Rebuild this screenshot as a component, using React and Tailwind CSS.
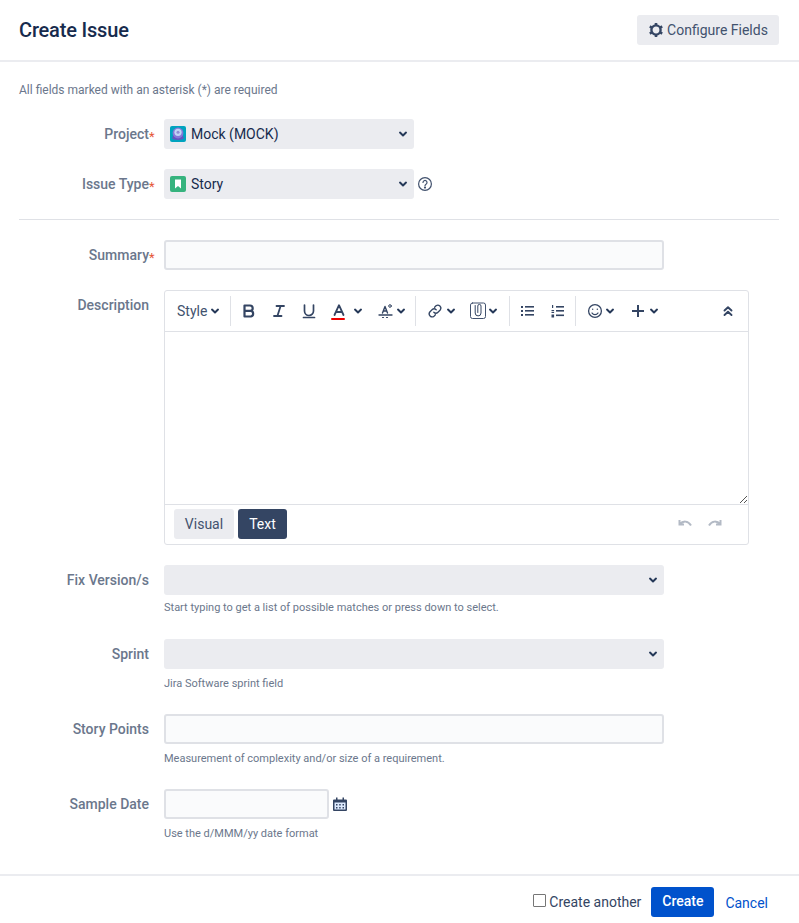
import React from "react";

const Chev = ({ className = "", w = 10 }) => (
  <svg width={w} height={w} viewBox="0 0 10 10" className={className} fill="none" stroke="#253858" strokeWidth="2" strokeLinecap="round" strokeLinejoin="round">
    <path d="M2 3.6 L5 6.4 L8 3.6" />
  </svg>
);

const Label = ({ children, req }) => (
  <div className="w-[149px] shrink-0 text-right text-[14px] leading-[20px] font-medium text-[#6b778c] whitespace-nowrap">
    {children}
    {req && <span className="relative top-[2px] inline-block w-[6px] mr-[-6px] text-left text-[13px] font-normal text-[#e5573a]">*</span>}
  </div>
);

const Row = ({ label, req, children, className = "" }) => (
  <div className={`flex gap-[15px] ${className}`}>
    <div className="pt-[5px]"><Label req={req}>{label}</Label></div>
    <div className="flex-1 min-w-0">{children}</div>
  </div>
);

const Select = ({ icon, text, className = "" }) => (
  <div className={`h-[30px] bg-[#ebecf0] rounded-[3px] flex items-center pl-[6px] pr-[6px] ${className}`}>
    {icon && <span className="mr-[5px] flex">{icon}</span>}
    <span className="flex-1 text-[14px] text-[#172b4d] leading-[20px]">{text}</span>
    <Chev />
  </div>
);

const Input = ({ className = "w-[500px]" }) => (
  <div className={`h-[30px] bg-[#fafbfc] border-2 border-[#dfe1e6] rounded-[3px] ${className}`} />
);

const Help = ({ children, className = "mt-[7px]" }) => (
  <div className={`${className} text-[11px] leading-[16px] text-[#6b778c]`}>{children}</div>
);

const Sep = ({ className = "ml-[8px] mr-[8px]" }) => <div className={`w-px h-[30px] bg-[#dfe1e6] ${className}`} />;

const MockIcon = () => (
  <svg width="16" height="16" viewBox="0 0 16 16">
    <rect width="16" height="16" rx="2" fill="#00a3bf" />
    <path d="M2 12.500 L3.500 8.500 H12.500 L14 12.500 Q8 15.500 2 12.500Z" fill="#6554c0" />
    <circle cx="8" cy="7" r="5.400" fill="#8777d9" />
    <circle cx="8" cy="6.300" r="3.600" fill="#c1d5f5" />
    <circle cx="8" cy="6.300" r="1.500" fill="#8f8ad6" />
  </svg>
);

const StoryIcon = () => (
  <svg width="16" height="16" viewBox="0 0 16 16">
    <rect width="16" height="16" rx="2" fill="#36b37e" />
    <path d="M5 3.500 H11 V12.500 L8 10 L5 12.500Z" fill="#fff" />
  </svg>
);

const Gear = () => (
  <svg width="16" height="16" viewBox="0 0 16 16" fill="none" stroke="#344563">
    <circle cx="8" cy="8" r="4.600" strokeWidth="2.400" />
    <path d="M8 .9V3M8 13V15.100M1.800 4.400L3.600 5.500M12.400 10.500L14.200 11.600M1.800 11.600L3.600 10.500M12.400 5.500L14.200 4.400" strokeWidth="2.600" />
  </svg>
);

const s = { fill: "none", stroke: "#344563", strokeLinecap: "round", strokeLinejoin: "round" };

const Toolbar = () => (
  <div className="h-[41px] flex items-center border-b border-[#dfe1e6] pl-[12px] pr-[14px] shrink-0">
    <span className="text-[14px] text-[#42526e] leading-[20px]">Style</span>
    <Chev className="ml-[3px]" />
    <Sep className="ml-[10px] mr-[8px]" />
    <div className="w-[36px] flex justify-center ml-[-8px] text-[#344563]">
      <svg width="16" height="16" viewBox="0 0 16 16" {...s} strokeWidth="2.200"><path d="M3.500 2.500H9a2.700 2.700 0 0 1 0 5.400H3.500ZM3.500 7.900H10a2.900 2.900 0 0 1 0 5.600H3.500Z" /></svg>
    </div>
    <div className="w-[24px] flex justify-center">
      <svg width="16" height="16" viewBox="0 0 16 16" {...s} strokeWidth="1.800"><path d="M5.500 3H13M3 13H10.500M9.600 3L6.400 13" /></svg>
    </div>
    <div className="w-[36px] flex justify-center">
      <svg width="16" height="16" viewBox="0 0 16 16" {...s} strokeWidth="1.700"><path d="M3.500 2V8a4.500 4.500 0 0 0 9 0V2M2.500 14.500H13.500" /></svg>
    </div>
    <div className="relative w-[24px] flex justify-center">
      <svg width="16" height="16" viewBox="0 0 16 16" {...s} strokeWidth="1.800"><path d="M3.500 12L8 2.200L12.500 12M5 9H11" /></svg>
      <div className="absolute left-[4px] top-[15px] w-[14px] h-[2px] bg-[#e00] rounded-[1px]" />
    </div>
    <Chev className="ml-[2px]" />
    <div className="w-[22px] ml-[12px] flex justify-center">
      <svg width="18" height="16" viewBox="0 0 18 16" {...s} strokeWidth="1.400"><path d="M5.500 10L8 3.500L10.500 10M6.500 8H9.500" /><circle cx="13" cy="3" r="1.300" strokeWidth="1" /><path d="M2 12H15" strokeWidth="1.300" /><path d="M5.500 14.500H6.500M9.500 14.500H10.500" strokeWidth="1.200" /></svg>
    </div>
    <Chev className="ml-[-1px]" />
    <Sep className="ml-[9px] mr-[8px]" />
    <div className="w-[24px] ml-[-1px] flex justify-center">
      <svg width="16" height="16" viewBox="0 0 16 16" {...s} strokeWidth="1.300"><path d="M6.800 9.200a3 3 0 0 0 4.200 0l2.200-2.200a3 3 0 0 0-4.200-4.200L7.600 4.200" /><path d="M9.200 6.800a3 3 0 0 0-4.200 0L2.800 9a3 3 0 0 0 4.200 4.200l1.400-1.400" /></svg>
    </div>
    <Chev className="ml-[-1px]" />
    <div className="w-[20px] ml-[12px] flex justify-center">
      <svg width="16" height="18" viewBox="0 0 16 18" {...s} strokeWidth="1"><rect x="0.500" y="1" width="15" height="15.500" rx="2" stroke="#42526e" /><path d="M5.200 3.500V11a2.900 2.900 0 0 0 5.800 0V4a1.600 1.600 0 0 0-3.200 0V10.500" /></svg>
    </div>
    <Chev />
    <Sep className="ml-[11px] mr-[8px]" />
    <div className="w-[24px] ml-[-2px] flex justify-center">
      <svg width="14" height="14" viewBox="0 0 14 14" fill="#344563"><rect x="0" y="2" width="2" height="2" /><rect x="0" y="6" width="2" height="2" /><rect x="0" y="10" width="2" height="2" /><rect x="4" y="2" width="9" height="1.600" /><rect x="4" y="6" width="9" height="1.600" /><rect x="4" y="10" width="9" height="1.600" /></svg>
    </div>
    <div className="w-[24px] ml-[6px] flex justify-center">
      <svg width="14" height="14" viewBox="0 0 14 14" fill="#344563"><rect x="1" y="1" width="1.200" height="3" /><rect x="0.500" y="6" width="2.600" height="1.200" /><rect x="0.500" y="8" width="2.600" height="1" /><rect x="0.500" y="10.500" width="2.600" height="3" /><rect x="5" y="2" width="8" height="1.600" /><rect x="5" y="6" width="8" height="1.600" /><rect x="5" y="10.500" width="8" height="1.600" /></svg>
    </div>
    <Sep className="ml-[5px] mr-[8px]" />
    <div className="w-[22px] flex justify-center">
      <svg width="16" height="16" viewBox="0 0 16 16" {...s} strokeWidth="1.300"><circle cx="8" cy="8" r="6.400" /><path d="M5 10a3.600 3.600 0 0 0 6 0" /><circle cx="5.700" cy="6.200" r="0.700" fill="#344563" stroke="none" /><circle cx="10.300" cy="6.200" r="0.700" fill="#344563" stroke="none" /></svg>
    </div>
    <Chev className="ml-[-1px]" />
    <div className="w-[24px] ml-[11px] mr-[-1px] flex justify-center">
      <svg width="14" height="14" viewBox="0 0 14 14" {...s} strokeWidth="2" strokeLinecap="butt"><path d="M7 1V13M1 7H13" /></svg>
    </div>
    <Chev />
    <div className="flex-1" />
    <svg width="12" height="12" viewBox="0 0 12 12" {...s} strokeWidth="1.900"><path d="M2.500 5.500L6 2.300L9.500 5.500M2.500 10L6 6.800L9.500 10" /></svg>
  </div>
);

const Editor = () => (
  <div className="w-[585px] h-[255px] border border-[#dfe1e6] rounded-[3px] flex flex-col bg-white">
    <Toolbar />
    <div className="relative flex-1 border-b border-[#dfe1e6]">
      <svg className="absolute right-[1px] bottom-[1px]" width="7" height="7" viewBox="0 0 7 7" stroke="#555" strokeWidth="1"><path d="M0 7L7 0M4 7L7 4" /></svg>
    </div>
    <div className="h-[39px] shrink-0 flex items-start pt-[4px] pl-[9px] pr-[26px] gap-[4px]">
      <div className="h-[30px] w-[60px] text-center bg-[#ebecf0] rounded-[3px] text-[14px] text-[#42526e] leading-[30px]">Visual</div>
      <div className="h-[30px] w-[49px] text-center bg-[#344563] rounded-[3px] text-[14px] text-white leading-[30px]">Text</div>
      <div className="flex-1" />
      <div className="flex gap-[16px] h-[30px] items-center">
        <svg width="14" height="10" viewBox="0 0 14 10" fill="none" stroke="#b3bac5" strokeWidth="2"><path d="M1.500 1V5.500H6M1.500 5.500C5 1.500 10 1.500 13 6.500" /></svg>
        <svg width="14" height="10" viewBox="0 0 14 10" fill="none" stroke="#b3bac5" strokeWidth="2"><path d="M12.500 1V5.500H8M12.500 5.500C9 1.500 4 1.500 1 6.500" /></svg>
      </div>
    </div>
  </div>
);

export default function App() {
  return (
    <div className="h-[923px] flex flex-col bg-white font-['Roboto',sans-serif] text-[#172b4d]">
      <header className="h-[62px] shrink-0 border-b-2 border-[#ebecf0] flex items-start justify-between pl-[19px] pr-[20px] pt-[15px]">
        <h1 className="text-[20px] leading-[30px] font-medium tracking-[-0.18px] text-[#172b4d]">Create Issue</h1>
        <div className="h-[30px] w-[142px] bg-[#ebecf0] rounded-[3px] flex items-center justify-center gap-[3px] text-[14px] text-[#42526e]">
          <Gear />
          <span>Configure Fields</span>
        </div>
      </header>

      <main className="flex-1 pl-[19px] pr-[20px] pt-[20px]">
        <p className="text-[12px] leading-[16px] text-[#6b778c]">All fields marked with an asterisk (*) are required</p>

        <div className="mt-[21px] ml-[-19px] pr-0">
          <Row label="Project" req>
            <Select className="w-[250px]" icon={<MockIcon />} text="Mock (MOCK)" />
          </Row>
          <Row label="Issue Type" req className="mt-[20px]">
            <div className="flex items-center gap-[3px]">
              <Select className="w-[250px]" icon={<StoryIcon />} text="Story" />
              <svg width="16" height="16" viewBox="0 0 16 16" fill="none" stroke="#42526e" strokeWidth="1.200" strokeLinecap="round">
                <circle cx="8" cy="8" r="6.400" />
                <path d="M6 6.400a2 2 0 1 1 3 1.800c-.7.400-1 .8-1 1.500" />
                <circle cx="8" cy="11.600" r="0.500" fill="#42526e" />
              </svg>
            </div>
          </Row>
        </div>

        <div className="h-px bg-[#dfe1e6] mt-[20px]" />

        <div className="mt-[20px] ml-[-19px]">
          <Row label="Summary" req>
            <Input />
          </Row>
          <Row label="Description" className="mt-[20px]">
            <Editor />
          </Row>
          <Row label="Fix Version/s" className="mt-[20px]">
            <Select className="w-[500px]" text="" />
            <Help className="mt-[5px]">Start typing to get a list of possible matches or press down to select.</Help>
          </Row>
          <Row label="Sprint" className="mt-[23px]">
            <Select className="w-[500px]" text="" />
            <Help>Jira Software sprint field</Help>
          </Row>
          <Row label="Story Points" className="mt-[22px]">
            <Input />
            <Help>Measurement of complexity and/or size of a requirement.</Help>
          </Row>
          <Row label="Sample Date" className="mt-[22px]">
            <div className="flex items-center gap-[3px]">
              <Input className="w-[165px]" />
              <svg width="16" height="16" viewBox="0 0 16 16">
                <path d="M2 3.500H14a1 1 0 0 1 1 1V14a1 1 0 0 1-1 1H2a1 1 0 0 1-1-1V4.500a1 1 0 0 1 1-1Z" fill="#344563" />
                <rect x="4" y="1.500" width="1.500" height="3" fill="#344563" />
                <rect x="10.500" y="1.500" width="1.500" height="3" fill="#344563" />
                <rect x="2.500" y="6.500" width="11" height="7" fill="#deebff" />
                <path d="M4 8h1.500v1.500H4zM7.200 8h1.500v1.500H7.200zM10.500 8H12v1.500h-1.500zM4 11h1.500v1.500H4zM7.200 11h1.500v1.500H7.200zM10.500 11H12v1.500h-1.500z" fill="#344563" />
              </svg>
            </div>
            <Help>Use the d/MMM/yy date format</Help>
          </Row>
        </div>
      </main>

      <footer className="h-[49px] shrink-0 border-t-2 border-[#ebecf0] flex items-start justify-end pr-[31px] pt-[11px]">
        <div className="h-[30px] flex items-center text-[14px] text-[#344563]">
          <span className="w-[13px] h-[13px] border border-[#767676] rounded-[1px] mr-[3px] mt-[-3px] bg-white" />
          <span>Create another</span>
        </div>
        <div className="ml-[10px] h-[30px] w-[63px] bg-[#0052cc] rounded-[3px] text-white text-[14px] font-medium leading-[28px] text-center">Create</div>
        <div className="ml-[11px] h-[30px] leading-[32px] text-[14px] text-[#0052cc]">Cancel</div>
      </footer>
    </div>
  );
}
